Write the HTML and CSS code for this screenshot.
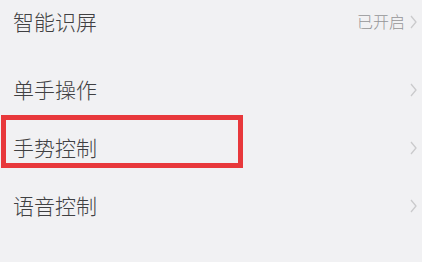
FILE: index.html
```html
<!DOCTYPE html>
<html lang="zh-CN">
<head>
  <meta charset="UTF-8">
  <meta name="viewport" content="width=device-width, initial-scale=1.0">
  <title>设置</title>
  <link rel="stylesheet" href="styles.css">
</head>
<body>
  <div class="wrapper">
    <ul class="list">
      <!-- 智能识屏 -->
      <li class="row row-first">
        <span class="label">智能识屏</span>
        <span class="value">已开启</span>
        <svg class="arrow" width="7" height="14" viewBox="0 0 7 14"><polyline points="1,1 6,7 1,13"/></svg>
      </li>
      <li class="row">
        <span class="label">单手操作</span>
        <svg class="arrow" width="7" height="14" viewBox="0 0 7 14"><polyline points="1,1 6,7 1,13"/></svg>
      </li>
      <li class="row">
        <span class="label">手势控制</span>
        <svg class="arrow" width="7" height="14" viewBox="0 0 7 14"><polyline points="1,1 6,7 1,13"/></svg>
      </li>
      <li class="row">
        <span class="label">语音控制</span>
        <svg class="arrow" width="7" height="14" viewBox="0 0 7 14"><polyline points="1,1 6,7 1,13"/></svg>
      </li>
    </ul>

    <!-- 标注框 -->
    <div class="mark"></div>
  </div>
</body>
</html>
```

FILE: styles.css
```css
html,
body {
  margin: 0;
  width: 100%;
  height: 100%;
  background: #f1f1f3;
}

.wrapper {
  position: relative;
  width: 100%; height: 100%;
  overflow: hidden;
  font-family: "Noto Sans CJK SC", "Noto Sans", sans-serif;
}

.list {
  list-style: none;
  margin: 0;
  padding: 0 4px 0 13px;
}

.row {
  display: flex;
  align-items: center;
  height: 58px;
}
.row-first {
  height: 44px;
  margin-bottom: 17px;
}

.label {
  flex: 1;
  font-size: 21px;
  font-weight: 300;
  color: #404042;
  margin-top: -2px;
}

.value {
  font-size: 16px;
  font-weight: 300;
  color: #959597;
  margin-right: 5px;
  margin-top: -2px;
}

.arrow {
  margin-right: 1px;
}
.arrow polyline {
  fill: none;
  stroke: #cacacc;
  stroke-width: 1.3;
}

.mark {
  position: absolute;
  top: 115px; left: 1px;
  width: 232px; height: 43px;
  border: 5px solid #e8383b;
}
```
